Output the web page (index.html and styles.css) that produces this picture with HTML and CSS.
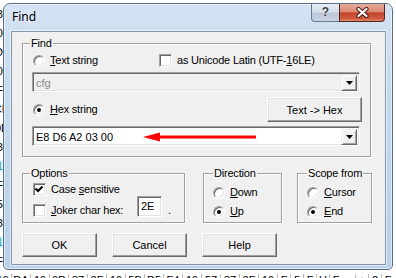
FILE: index.html
```html
<!DOCTYPE html>
<html lang="en">
	<head>
		<meta charset="UTF-8" />
		<title>Find</title>
		<link rel="stylesheet" href="styles.css">
	</head>
	<body>
		<div class="hexview">
			<div class="hex-row"><span class="hex-lead">30</span></div>
			<div class="hex-row"><span class="hex-lead">00</span></div>
			<div class="hex-row"><span class="hex-lead">D0</span></div>
			<div class="hex-row"><span class="hex-lead">00</span></div>
			<div class="hex-row"><span class="hex-lead">F7</span></div>
			<div class="hex-row"><span class="hex-lead">CE</span></div>
			<div class="hex-row"><span class="hex-lead">0D</span></div>
			<div class="hex-row"><span class="hex-lead">38</span></div>
			<div class="hex-row"><span class="hex-lead mark">19</span></div>
			<div class="hex-row"><span class="hex-lead">F5</span></div>
			<div class="hex-row"><span class="hex-lead">58</span></div>
			<div class="hex-row"><span class="hex-lead">38</span></div>
			<div class="hex-row"><span class="hex-lead mark">19</span></div>
			<div class="hex-row"><span class="hex-lead">F5</span></div>
			<div class="hex-row">
				<span class="hex-lead">19</span>
				<span class="hex-cell">DA</span>
				<span class="hex-cell">19</span>
				<span class="hex-cell">0D</span>
				<span class="hex-cell">87</span>
				<span class="hex-cell">3F</span>
				<span class="hex-cell">19</span>
				<span class="hex-cell">5B</span>
				<span class="hex-cell">D5</span>
				<span class="hex-cell">F4</span>
				<span class="hex-cell">19</span>
				<span class="hex-cell">57</span>
				<span class="hex-cell">87</span>
				<span class="hex-cell">3F</span>
				<span class="hex-cell">19</span>
				<span class="chr-cell">F</span>
				<span class="chr-cell">5</span>
				<span class="chr-cell">F</span>
				<span class="chr-cell">U</span>
				<span class="chr-cell">F</span>
				<span class="chr-cell"></span>
				<span class="chr-cell">+</span>
				<span class="chr-cell">2</span>
				<span class="chr-cell">F</span>
			</div>
		</div>

		<div class="window">
			<div class="titlebar">
				<span class="title">Find</span>
				<div class="caption-btns">
					<span class="cap-help">?</span>
					<span class="cap-close">
						<svg width="13" height="11" viewBox="0 0 13 11">
							<path d="M2.5 2 L10.5 9 M10.5 2 L2.5 9" stroke="#4a1d14" stroke-width="4.2" stroke-linecap="round" fill="none"/>
							<path d="M2.5 2 L10.5 9 M10.5 2 L2.5 9" stroke="#fff" stroke-width="2.2" stroke-linecap="round" fill="none"/>
						</svg>
					</span>
				</div>
			</div>

			<div class="client">
				<fieldset class="group find-group">
					<legend>Find</legend>
					<div class="row row-top">
						<label class="opt opt-text"><span class="radio"></span><span><u>T</u>ext string</span></label>
						<label class="opt"><span class="check"></span><span>as Unicode Latin (UTF-<u>1</u>6LE)</span></label>
					</div>
					<div class="combo disabled">
						<span class="combo-text">cfg</span>
						<span class="drop"><svg width="7" height="4" viewBox="0 0 7 4"><path d="M0 0 H7 L3.5 4 Z" fill="#000"/></svg></span>
					</div>
					<div class="row row-hex">
						<label class="opt"><span class="radio on"></span><span><u>H</u>ex string</span></label>
						<span class="btn btn-convert">Text -&gt; Hex</span>
					</div>
					<div class="combo combo-hex">
						<span class="combo-text">E8 D6 A2 03 00</span>
						<svg class="arrow" width="116" height="12" viewBox="0 0 116 12">
							<path d="M0 6 L17 1.5 L17 10.5 Z" fill="#f00"/>
							<rect x="16" y="4.5" width="97" height="3" fill="#f00"/>
						</svg>
						<span class="drop"><svg width="7" height="4" viewBox="0 0 7 4"><path d="M0 0 H7 L3.5 4 Z" fill="#000"/></svg></span>
					</div>
				</fieldset>

				<div class="lower">
					<fieldset class="group options-group">
						<legend>Options</legend>
						<label class="opt"><span class="check on"><svg width="11" height="11" viewBox="0 0 11 11"><path d="M1.5 4.5 L4 7 L8.5 2.5" stroke="#000" stroke-width="2" fill="none"/></svg></span><span>Case <u>s</u>ensitive</span></label>
						<div class="row row-joker">
							<label class="opt opt-joker"><span class="check"></span><span><u>J</u>oker char hex:</span></label>
							<span class="edit">2E</span>
							<span class="dot">.</span>
						</div>
					</fieldset>
					<fieldset class="group dir-group">
						<legend>Direction</legend>
						<label class="opt"><span class="radio"></span><span><u>D</u>own</span></label>
						<label class="opt"><span class="radio on"></span><span><u>U</u>p</span></label>
					</fieldset>
					<fieldset class="group scope-group">
						<legend>Scope from</legend>
						<label class="opt"><span class="radio"></span><span><u>C</u>ursor</span></label>
						<label class="opt"><span class="radio on"></span><span><u>E</u>nd</span></label>
					</fieldset>
				</div>

				<div class="buttons">
					<span class="btn">OK</span>
					<span class="btn">Cancel</span>
					<span class="btn">Help</span>
				</div>
			</div>
		</div>
	</body>
</html>
```

FILE: styles.css
```css
* {
	margin: 0;
	padding: 0;
	box-sizing: border-box;
}

body {
	width: 396px;
	height: 278px;
	overflow: hidden;
	position: relative;
	background: #fff;
	font-family: 'Liberation Sans', Arial, sans-serif;
	font-size: 11px;
	color: #000;
}

u {
	text-decoration: underline;
	text-underline-offset: 1px;
}

/* hex editor behind the dialog */

.hexview {
	padding-top: 4px;
}

.hex-row {
	display: flex;
	height: 19px;
	align-items: center;
	white-space: nowrap;
}

.hex-lead {
	width: 11px;
	padding-right: 2px;
	overflow: hidden;
	direction: rtl;
	flex-shrink: 0;
}

.hex-lead.mark {
	color: #2b8c97;
	background: #d8f1f3;
}

.hex-cell {
	width: 19px;
	flex-shrink: 0;
	text-align: center;
	border-left: 1px solid #b8b8b8;
}

.chr-cell {
	width: 13px;
	flex-shrink: 0;
	text-align: center;
	border-left: 1px solid #b8b8b8;
}

/* window frame */

.window {
	position: absolute;
	left: 3px;
	top: 3px;
	width: 390px;
	height: 267px;
	border: 1px solid #5a6d82;
	border-radius: 7px 7px 5px 5px;
	background: linear-gradient(180deg, #d4e3f3 0%, #c6daef 30%, #bed4eb 70%, #b9d0e9 100%);
	box-shadow: inset 0 0 0 1px rgba(255, 255, 255, 0.55);
	padding-bottom: 4px;
	display: flex;
	flex-direction: column;
}

.titlebar {
	height: 27px;
	display: flex;
	justify-content: space-between;
	align-items: flex-start;
	padding: 0 7px 0 8px;
}

.title {
	margin-top: 5px;
	font-family: 'Noto Sans', 'Open Sans', sans-serif;
	font-size: 12px;
	line-height: 16px;
	color: #000;
	text-shadow: 0 0 6px rgba(255, 255, 255, 0.9);
}

.caption-btns {
	display: flex;
	height: 18px;
}

.cap-help {
	width: 28px;
	height: 18px;
	border: 1px solid #6a7b8e;
	border-top: none;
	border-right: none;
	border-radius: 0 0 0 4px;
	background: linear-gradient(180deg, #e6ecf3 0%, #d5dee9 48%, #bcc8d7 52%, #c7d3e1 100%);
	font-weight: bold;
	font-size: 12px;
	line-height: 17px;
	text-align: center;
	color: #3c4450;
	text-shadow: 0 0 2px #fff;
}

.cap-close {
	width: 46px;
	height: 18px;
	border: 1px solid #57281f;
	border-top: none;
	border-radius: 0 0 4px 0;
	background: linear-gradient(180deg, #e8ab9b 0%, #d98a74 45%, #c2442b 52%, #cf5a3f 85%, #e08a6a 100%);
	display: flex;
	align-items: center;
	justify-content: center;
}

/* client area */

.client {
	flex: 1;
	margin: 0 6px 0 7px;
	border: 1px solid #8395ab;
	box-shadow: 0 0 0 1px rgba(255, 255, 255, 0.6);
	background: #f0f0f0;
	padding: 5px 10px 0 10px;
}

.group {
	border: 1px solid #a0a0a0;
	box-shadow: 1px 1px 0 #fff, inset 1px 1px 0 #fff;
	padding: 0 7px;
	min-width: 0;
}

.group legend {
	padding: 0 1px;
	line-height: 13px;
	font-size: 11px;
	white-space: nowrap;
	letter-spacing: -0.2px;
}

.find-group {
	width: 349px;
	padding-top: 4px;
	padding-bottom: 10px;
}

.row {
	display: flex;
	align-items: center;
}

.row-top {
	height: 13px;
	padding-left: 3px;
}

.opt {
	display: flex;
	align-items: center;
	gap: 5px;
	height: 13px;
	line-height: 13px;
	letter-spacing: -0.2px;
	white-space: nowrap;
}

.opt-text {
	width: 126px;
}

.radio {
	width: 12px;
	height: 12px;
	flex-shrink: 0;
	border-radius: 50%;
	background: #fff;
	border: 1px solid;
	border-color: #a0a0a0 #fff #fff #a0a0a0;
	box-shadow: inset 1px 1px 0 #696969, inset -1px -1px 0 #e3e3e3;
	position: relative;
}

.radio.on::after {
	content: '';
	position: absolute;
	left: 3px;
	top: 3px;
	width: 4px;
	height: 4px;
	border-radius: 50%;
	background: #000;
}

.check {
	width: 13px;
	height: 13px;
	flex-shrink: 0;
	background: #fff;
	border: 1px solid;
	border-color: #a0a0a0 #fff #fff #a0a0a0;
	box-shadow: inset 1px 1px 0 #696969, inset -1px -1px 0 #e3e3e3;
	display: flex;
	align-items: center;
	justify-content: center;
}

.combo {
	display: flex;
	height: 20px;
	width: 328px;
	margin-left: 2px;
	margin-top: 5px;
	padding: 2px;
	background: #fff;
	border: 1px solid;
	border-color: #a0a0a0 #fff #fff #a0a0a0;
	box-shadow: inset 1px 1px 0 #696969, inset -1px -1px 0 #e3e3e3;
	position: relative;
}

.combo.disabled {
	background: #f0f0f0;
	color: #8a8a8a;
}

.combo-text {
	flex: 1;
	padding-left: 1px;
	line-height: 16px;
}

.combo-hex {
	margin-top: 4px;
}

.arrow {
	position: absolute;
	left: 110px;
	top: 4px;
}

.drop {
	width: 16px;
	height: 16px;
	background: #f0f0f0;
	border: 1px solid;
	border-color: #f0f0f0 #696969 #696969 #f0f0f0;
	box-shadow: inset 1px 1px 0 #fff, inset -1px -1px 0 #a0a0a0;
	display: flex;
	align-items: center;
	justify-content: center;
}

.row-hex {
	justify-content: space-between;
	height: 25px;
	margin-top: 5px;
	padding-left: 3px;
	margin-right: 1px;
}

.btn {
	display: flex;
	align-items: center;
	justify-content: center;
	width: 75px;
	height: 24px;
	background: #f0f0f0;
	border: 1px solid;
	border-color: #fff #696969 #696969 #fff;
	box-shadow: inset -1px -1px 0 #a0a0a0, inset 1px 1px 0 #e3e3e3;
}

.btn-convert {
	width: 95px;
	height: 25px;
}

/* lower groups */

.lower {
	display: flex;
	margin-top: 10px;
}

.options-group {
	width: 163px;
	padding-top: 3px;
	padding-bottom: 5px;
}

.options-group > .opt {
	padding-left: 3px;
}

.row-joker {
	align-items: flex-end;
	height: 21px;
}

.opt-joker {
	width: 107px;
	padding-left: 3px;
}

.edit {
	width: 25px;
	height: 21px;
	padding: 3px 0 0 3px;
	line-height: 13px;
	background: #fff;
	border: 1px solid;
	border-color: #a0a0a0 #fff #fff #a0a0a0;
	box-shadow: inset 1px 1px 0 #696969, inset -1px -1px 0 #e3e3e3;
}

.dot {
	margin-left: 6px;
	line-height: 13px;
}

.dir-group,
.scope-group {
	display: flex;
	flex-direction: column;
	gap: 6px;
	padding: 6px 2px 0 9px;
}

.dir-group {
	width: 79px;
	margin-left: 18px;
}

.scope-group {
	width: 75px;
	margin-left: 15px;
}

.buttons {
	display: flex;
	gap: 15px;
	margin-top: 10px;
}
```
